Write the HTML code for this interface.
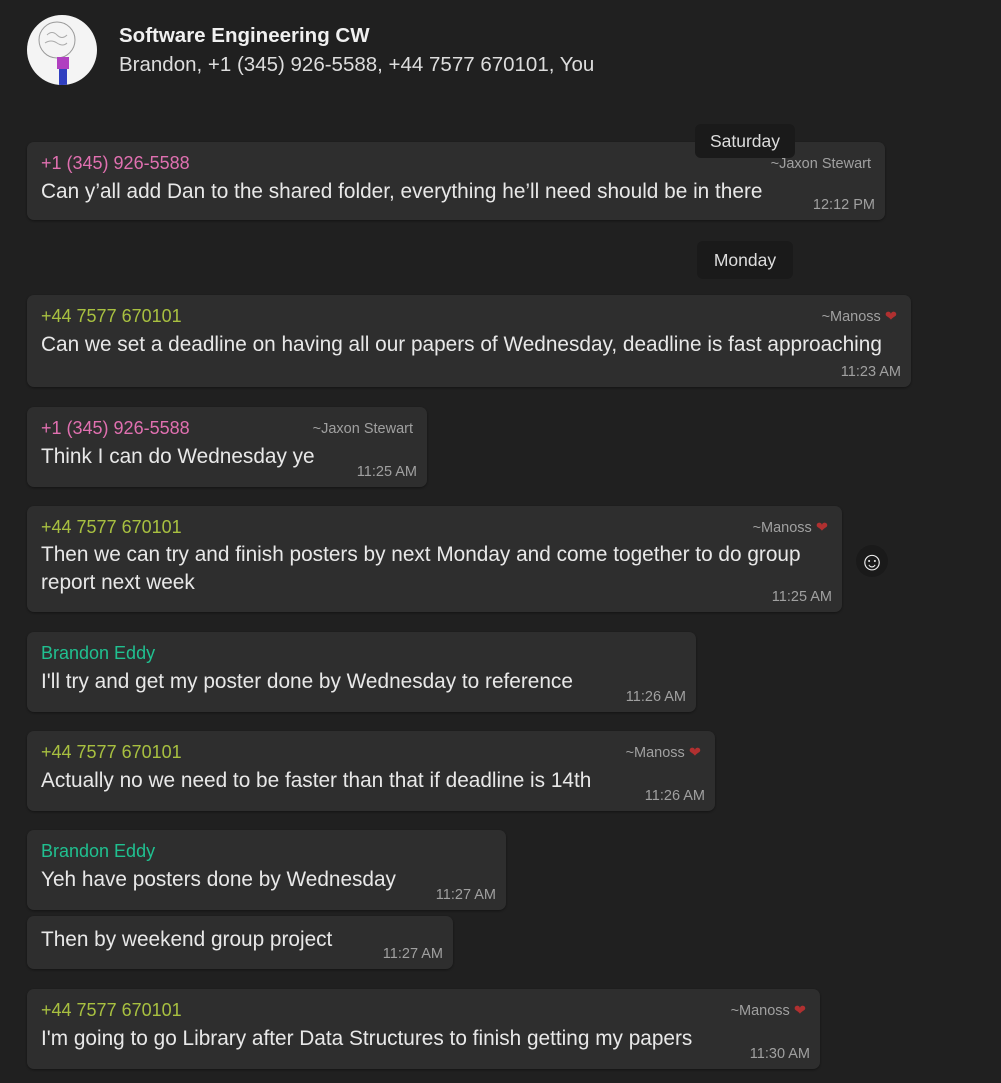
<!DOCTYPE html>
<html><head><meta charset="utf-8"><style>
body{margin:0;width:1001px;height:1083px;background:#202020;font-family:"Liberation Sans",sans-serif;position:relative;overflow:hidden;color:#e6e6e6}
.b{position:absolute;left:27px;background:#2e2e2e;border-radius:7px;box-shadow:0 1px 2px rgba(0,0,0,.4)}
.n{position:absolute;left:14px;top:11px;font-size:18px}
.t{position:absolute;left:14px;font-size:20.8px;color:#e8e8e8;white-space:nowrap;line-height:28px}
.a{position:absolute;right:14px;top:14px;font-size:14.5px;color:#a0a0a0}
.tm{position:absolute;right:10px;bottom:7px;font-size:14.5px;color:#a0a0a0}
.p{color:#e070b0}.g{color:#a8c040}.gr{color:#20c090}
.h{color:#b03030}
.chip{position:absolute;background:#1a1a1a;border-radius:6px;font-size:17.5px;color:#ddd;text-align:center}
</style></head><body>
<div style="position:absolute;left:27px;top:15px;width:70px;height:70px;border-radius:50%;background:#f4f4f4;overflow:hidden">
<svg width="70" height="70"><circle cx="30" cy="25" r="18" fill="none" stroke="#999" stroke-width="1"/><path d="M20 20q5-5 10 0t10 0M18 28q6-4 12 0t10 0" stroke="#aaa" fill="none"/><rect x="30" y="42" width="12" height="12" fill="#b040c0"/><rect x="32" y="54" width="8" height="16" fill="#3040c0"/></svg></div>
<div style="position:absolute;left:119px;top:24px;font-size:20.5px;font-weight:bold;color:#f0f0f0">Software Engineering CW</div>
<div style="position:absolute;left:119px;top:53px;font-size:20.5px;color:#ddd">Brandon, +1 (345) 926-5588, +44 7577 670101, You</div>

<div class="b" style="top:142px;width:858px;height:78px"><div class="n p">+1 (345) 926-5588</div><div class="a">~Jaxon Stewart</div><div class="t" style="top:36px">Can y’all add Dan to the shared folder, everything he’ll need should be in there</div><div class="tm">12:12 PM</div></div>
<div class="chip" style="left:695px;top:124px;width:100px;height:34px;line-height:34px">Saturday</div>
<div class="chip" style="left:697px;top:241px;width:96px;height:38px;line-height:38px">Monday</div>

<div class="b" style="top:295px;width:884px;height:92px"><div class="n g">+44 7577 670101</div><div class="a">~Manoss <span class="h">❤</span></div><div class="t" style="top:36px">Can we set a deadline on having all our papers of Wednesday, deadline is fast approaching</div><div class="tm">11:23 AM</div></div>

<div class="b" style="top:407px;width:400px;height:80px"><div class="n p">+1 (345) 926-5588</div><div class="a">~Jaxon Stewart</div><div class="t" style="top:36px">Think I can do Wednesday ye</div><div class="tm">11:25 AM</div></div>

<div class="b" style="top:506px;width:815px;height:106px"><div class="n g">+44 7577 670101</div><div class="a">~Manoss <span class="h">❤</span></div><div class="t" style="top:35px">Then we can try and finish posters by next Monday and come together to do group<br>report next week</div><div class="tm">11:25 AM</div></div>
<div style="position:absolute;left:856px;top:545px;width:32px;height:32px;border-radius:50%;background:#1a1a1a;color:#eee;font-size:26px;line-height:32px;text-align:center">☺</div>

<div class="b" style="top:632px;width:669px;height:80px"><div class="n gr">Brandon Eddy</div><div class="t" style="top:36px">I'll try and get my poster done by Wednesday to reference</div><div class="tm">11:26 AM</div></div>

<div class="b" style="top:731px;width:688px;height:80px"><div class="n g">+44 7577 670101</div><div class="a">~Manoss <span class="h">❤</span></div><div class="t" style="top:36px">Actually no we need to be faster than that if deadline is 14th</div><div class="tm">11:26 AM</div></div>

<div class="b" style="top:830px;width:479px;height:80px"><div class="n gr">Brandon Eddy</div><div class="t" style="top:36px">Yeh have posters done by Wednesday</div><div class="tm">11:27 AM</div></div>

<div class="b" style="top:916px;width:426px;height:53px"><div class="t" style="top:10px">Then by weekend group project</div><div class="tm">11:27 AM</div></div>

<div class="b" style="top:989px;width:793px;height:80px"><div class="n g">+44 7577 670101</div><div class="a">~Manoss <span class="h">❤</span></div><div class="t" style="top:36px">I'm going to go Library after Data Structures to finish getting my papers</div><div class="tm">11:30 AM</div></div>
</body></html>
